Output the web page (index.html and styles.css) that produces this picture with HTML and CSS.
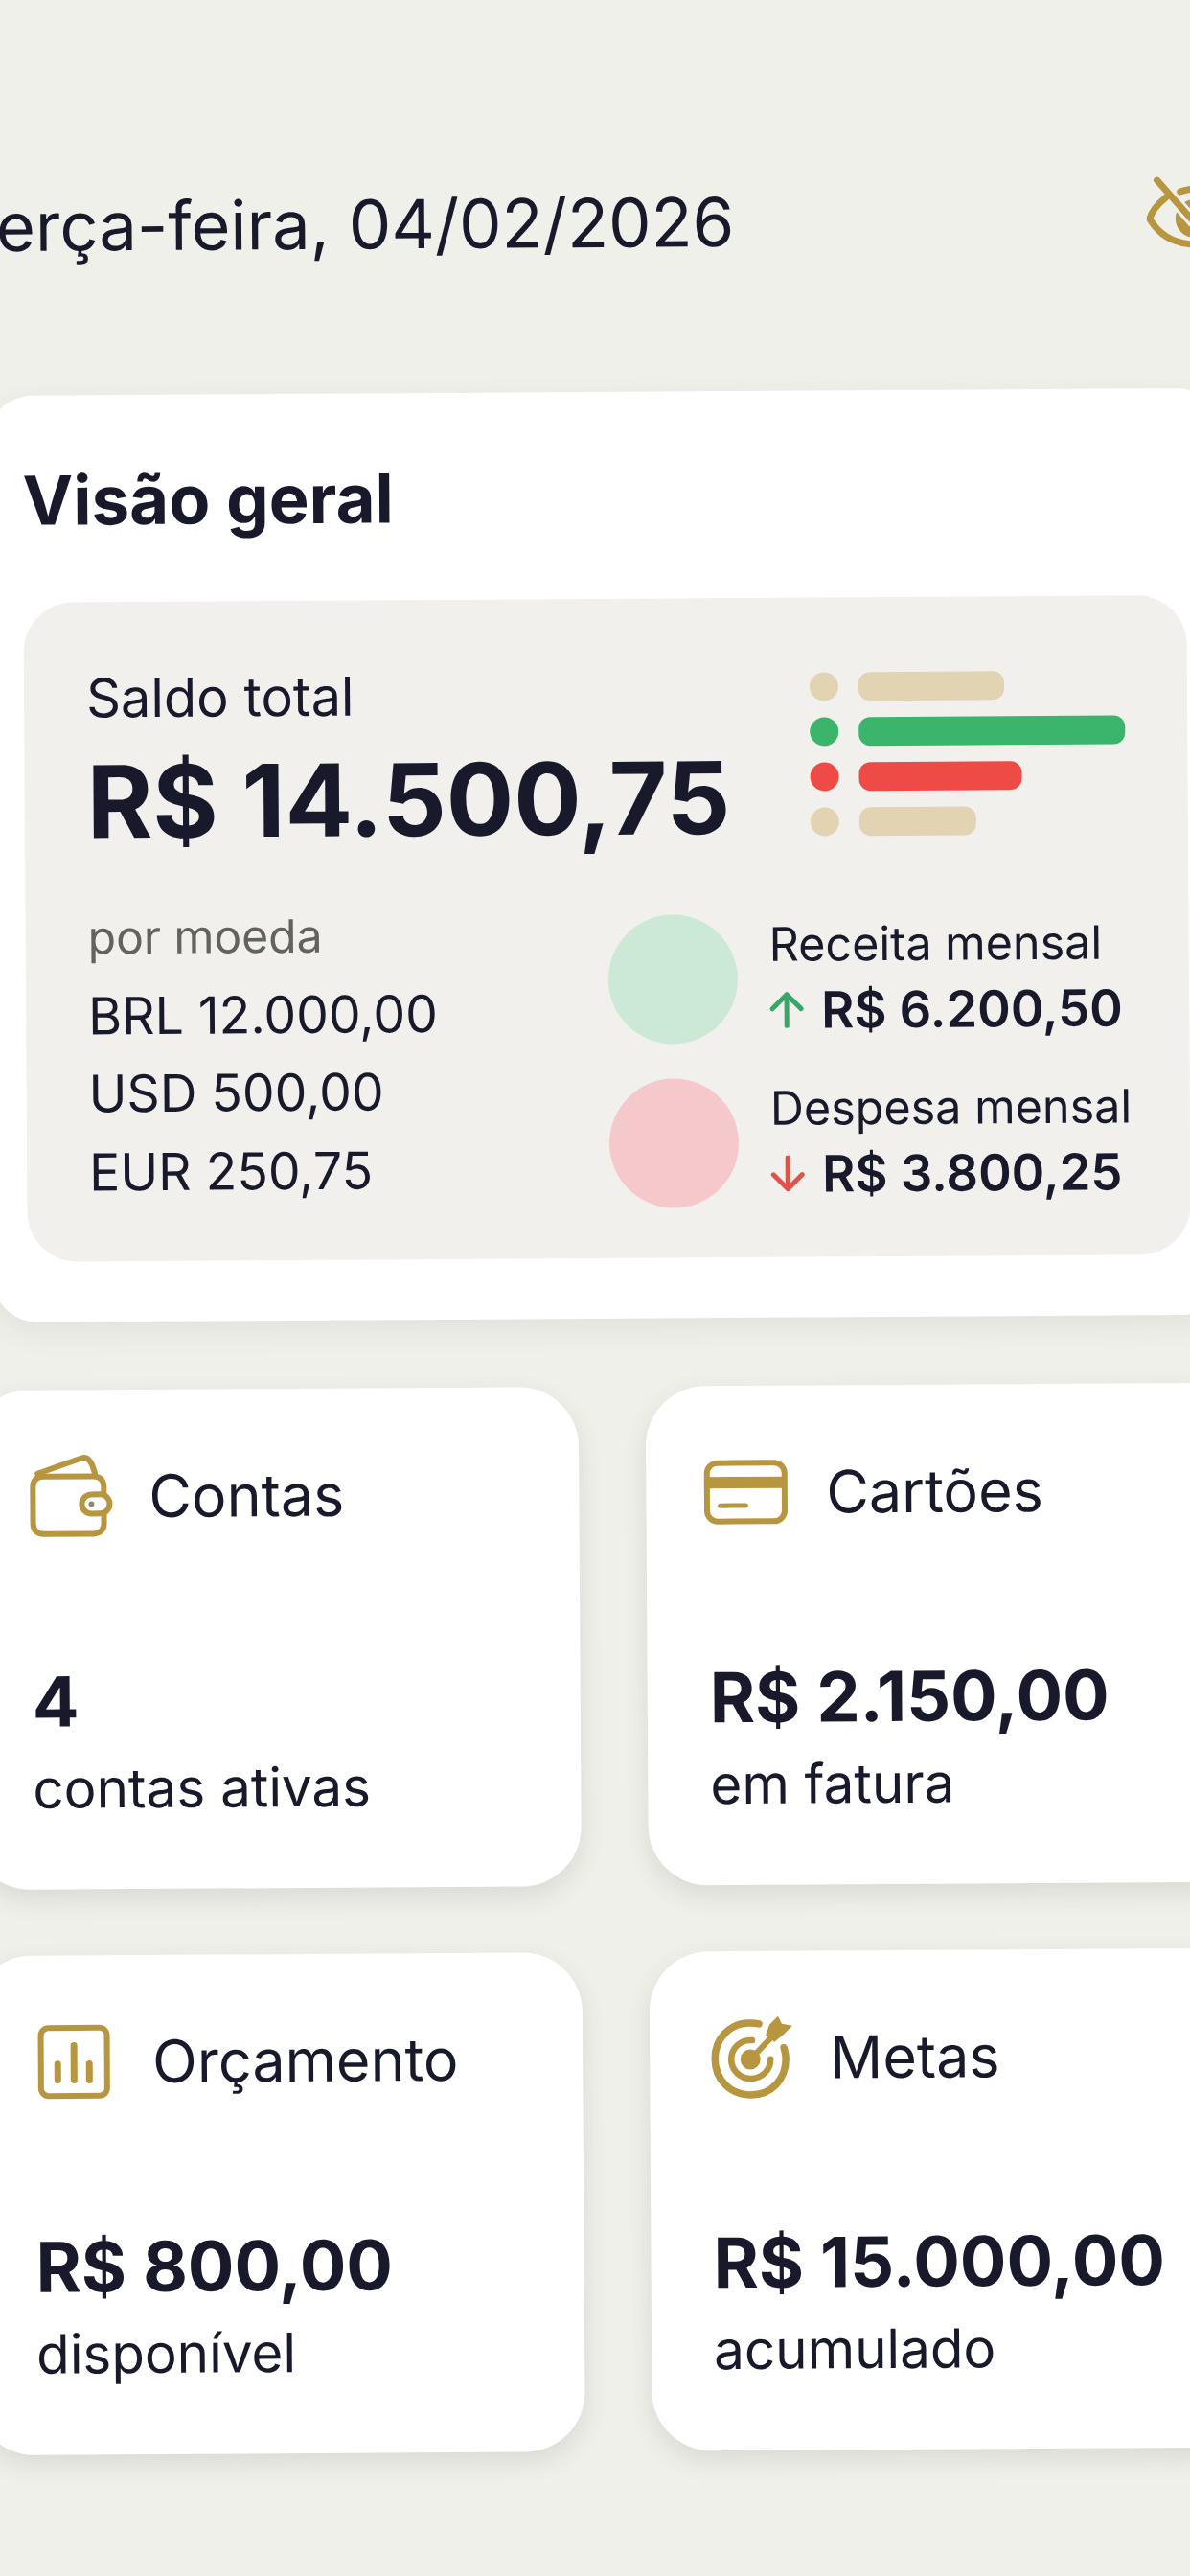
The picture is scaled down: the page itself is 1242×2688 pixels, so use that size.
FILE: index.html
```html
<!DOCTYPE html>
<html lang="pt-BR">
<head>
<meta charset="utf-8">
<title>Visão geral</title>
<link rel="stylesheet" href="styles.css">
</head>
<body>
<main class="screen">
  <header class="topbar">
    <h1 class="date">Terça-feira, 04/02/2026</h1>
    <svg class="eye" viewBox="0 0 110 80" fill="none" stroke-linecap="round" stroke-linejoin="round">
      <circle cx="50" cy="44" r="20" fill="#b8963f"/>
      <path d="M11 4L58 58" stroke="#f0f0eb" stroke-width="13"/>
      <path d="M20 22C11 29 5 37 3 44C14 63 32 71 52 71C74 71 94 62 107 44C94 24 74 13 52 13C46 13 41 14 35 16" stroke="#b8963f" stroke-width="7"/>
      <path d="M11 4L47 45" stroke="#b8963f" stroke-width="7"/>
    </svg>
  </header>

  <section class="overview">
    <h2 class="overview-title">Visão geral</h2>
    <div class="panel">
      <div class="panel-top">
        <div>
          <div class="balance-label">Saldo total</div>
          <div class="balance-value">R$ 14.500,75</div>
        </div>
        <div class="legend">
          <div class="legend-row"><span class="dot tan"></span><span class="bar tan w-a"></span></div>
          <div class="legend-row"><span class="dot green"></span><span class="bar green w-b"></span></div>
          <div class="legend-row"><span class="dot red"></span><span class="bar red w-c"></span></div>
          <div class="legend-row"><span class="dot tan"></span><span class="bar tan w-d"></span></div>
        </div>
      </div>
      <div class="panel-bottom">
        <div class="currencies">
          <div class="currency-head">por moeda</div>
          <div>BRL 12.000,00</div>
          <div>USD 500,00</div>
          <div>EUR 250,75</div>
        </div>
        <div class="flows">
          <div class="flow">
            <span class="disc disc-green"></span>
            <div>
              <div class="flow-label">Receita mensal</div>
              <div class="flow-value">
                <svg class="arrow" viewBox="0 0 36 38" fill="none" stroke="#35a867" stroke-width="5" stroke-linecap="round" stroke-linejoin="round"><path d="M18 36V3M3 18L18 3L33 18"/></svg>
                R$ 6.200,50
              </div>
            </div>
          </div>
          <div class="flow">
            <span class="disc disc-red"></span>
            <div>
              <div class="flow-label">Despesa mensal</div>
              <div class="flow-value">
                <svg class="arrow" viewBox="0 0 36 38" fill="none" stroke="#e2504a" stroke-width="5" stroke-linecap="round" stroke-linejoin="round"><path d="M18 2V35M3 20L18 35L33 20"/></svg>
                R$ 3.800,25
              </div>
            </div>
          </div>
        </div>
      </div>
    </div>
  </section>

  <section class="tiles">
    <article class="tile">
      <div class="tile-head">
        <span class="tile-icon">
          <svg width="88" height="88" viewBox="3 0 88 88" fill="none" stroke="#b8963f" stroke-width="6" stroke-linecap="round" stroke-linejoin="round">
            <path d="M10 20L56 4C63 2 67 8 70 21"/>
            <path d="M79 42V34C79 27 75 23 68 23H16C9 23 5 27 5 34V72C5 79 9 83 16 83H68C75 83 79 79 79 72V62"/>
            <rect x="56" y="42" width="29" height="20" rx="10"/>
            <circle cx="66" cy="52" r="3" fill="#8f8a78" stroke="none"/>
          </svg>
        </span>
        <span class="tile-name">Contas</span>
      </div>
      <div class="tile-value">4</div>
      <div class="tile-note">contas ativas</div>
    </article>
    <article class="tile">
      <div class="tile-head">
        <span class="tile-icon">
          <svg width="88" height="68" viewBox="5 0 88 68" fill="none" stroke="#b8963f" stroke-width="6" stroke-linecap="round">
            <rect x="3.500" y="3.500" width="81" height="61" rx="11"/>
            <path d="M3 24H85" stroke-width="12" stroke-linecap="butt"/>
            <path d="M17 48H44" stroke-width="5"/>
          </svg>
        </span>
        <span class="tile-name">Cartões</span>
      </div>
      <div class="tile-value">R$ 2.150,00</div>
      <div class="tile-note">em fatura</div>
    </article>
    <article class="tile">
      <div class="tile-head">
        <span class="tile-icon">
          <svg width="76" height="78" viewBox="3 0 76 78" fill="none" stroke="#b8963f" stroke-width="6" stroke-linecap="round">
            <rect x="3.500" y="3.500" width="69" height="71" rx="8"/>
            <path d="M21 41V58M38 22V58M54 41V58" stroke-width="7"/>
          </svg>
        </span>
        <span class="tile-name">Orçamento</span>
      </div>
      <div class="tile-value">R$ 800,00</div>
      <div class="tile-note">disponível</div>
    </article>
    <article class="tile">
      <div class="tile-head">
        <span class="tile-icon">
          <svg width="86" height="88" viewBox="2 0 86 88" fill="none" stroke="#b8963f" stroke-linecap="round">
            <path d="M50 9C46 8 43 8 40 8C19 8 4 25 4 45C4 67 20 83 41 83C63 83 78 67 78 45C78 41 77 38 76 34" stroke-width="7.500"/>
            <path d="M43 26C31 25 21 34 21 46C21 57 30 66 41 66C53 66 62 57 62 46" stroke-width="6.500"/>
            <circle cx="41" cy="46" r="10.500" fill="#b8963f" stroke="none"/>
            <path d="M41 46L63 23" stroke-width="6"/>
            <path d="M57 21L61 10L70 1L74 9L85 11L76 20L66 28Z" fill="#b8963f" stroke="none"/>
          </svg>
        </span>
        <span class="tile-name">Metas</span>
      </div>
      <div class="tile-value">R$ 15.000,00</div>
      <div class="tile-note">acumulado</div>
    </article>
  </section>
</main>
</body>
</html>
```
FILE: styles.css
```css
* { box-sizing: border-box; }
html, body { margin: 0; height: 2688px; overflow: hidden; background: #f0f0eb; }
body { font-family: Inter, "Liberation Sans", sans-serif; color: #181a2c; }

.screen {
  width: 1242px;
  height: 2688px;
  transform: rotate(-0.37deg);
  transform-origin: 621px 1344px;
}

.topbar {
  height: 409px;
  padding: 188px 0 0;
  margin-left: -37px;
  margin-right: -72px;
  display: flex;
  justify-content: space-between;
  align-items: flex-start;
}
.date { margin: 0; font-size: 70.500px; line-height: 90px; font-weight: 400; white-space: nowrap; }
.eye { width: 110px; height: 80px; flex: none; }

.overview {
  margin: 0 -40px 0 -8px;
  padding: 60px 0 60px 37px;
  height: 967px;
  background: #fff;
  border-radius: 48px;
  box-shadow: 0 10px 30px rgba(60, 60, 50, .08);
}
.overview-title { margin: 0 0 56px; font-size: 70.600px; line-height: 100px; font-weight: 700; }

.panel {
  width: 1214px;
  height: 688px;
  padding: 69px 56px 0 65px;
  background: #f1f0ec;
  border-radius: 52px;
}
.panel-top { display: flex; justify-content: space-between; }
.balance-label { font-size: 56px; line-height: 62px; white-space: nowrap; }
.balance-value { margin-top: 12px; font-size: 104.500px; line-height: 130px; font-weight: 700; white-space: nowrap; }

.legend { display: flex; flex-direction: column; gap: 16px; padding-top: 8px; width: 338px; }
.legend-row { display: flex; align-items: center; gap: 21px; height: 31px; }
.dot { width: 30px; height: 30px; border-radius: 50%; flex: none; }
.bar { height: 30px; border-radius: 12px; }
.tan { background: #e2d3b3; }
.green { background: #3cb56c; }
.red { background: #ee4a46; }
.w-a { width: 152px; }
.w-b { width: 278px; }
.w-c { width: 170px; }
.w-d { width: 122px; }

.panel-bottom { display: flex; margin-top: 36px; }
.currencies { flex: none; width: 543px; font-size: 53.500px; line-height: 81.500px; white-space: nowrap; }
.currency-head { color: #63635e; font-size: 48px; }
.flows { flex: none; display: flex; flex-direction: column; gap: 36px; padding-top: 21px; }
.flow { display: flex; align-items: center; gap: 33px; height: 135px; }
.disc { width: 135px; height: 135px; border-radius: 50%; flex: none; }
.disc-green { background: #cbe9d4; }
.disc-red { background: #f5c9cb; }
.flow-label { font-size: 48.500px; line-height: 64px; white-space: nowrap; }
.flow-value { display: flex; align-items: center; gap: 18px; font-size: 52.500px; line-height: 72px; font-weight: 600; white-space: nowrap; }
.arrow { width: 36px; height: 38px; flex: none; }

.tiles {
  display: grid;
  grid-template-columns: 637px 634px;
  grid-auto-rows: 521px;
  gap: 69px 70px;
  margin: 71px 0 0 -34px;
}
.tile {
  padding: 66px 0 0 65px;
  background: #fff;
  border-radius: 62px;
  box-shadow: 0 10px 26px rgba(60, 60, 50, .12);
}
.tile-head { display: flex; align-items: center; gap: 35px; height: 90px; margin-bottom: 125px; }
.tile-icon { width: 88px; display: flex; justify-content: center; flex: none; }
.tile-icon svg { overflow: visible; }
.tile-name { font-size: 61px; line-height: 90px; }
.tile-value { font-size: 72px; line-height: 88px; font-weight: 700; white-space: nowrap; }
.tile-note { font-size: 56.500px; line-height: 70px; margin-top: 12px; white-space: nowrap; }
```
